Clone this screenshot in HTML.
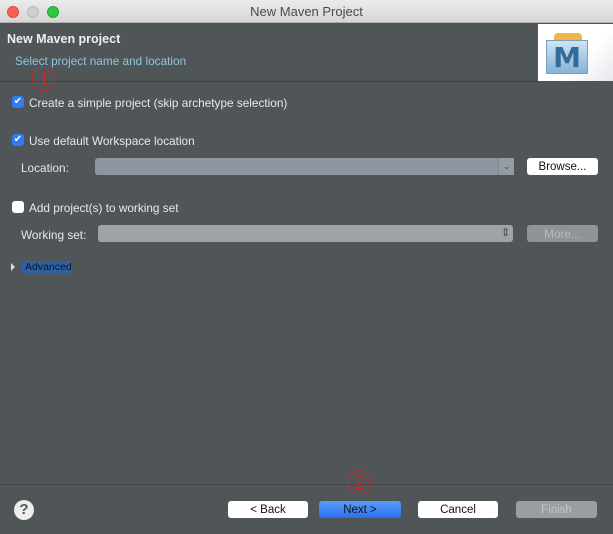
<!DOCTYPE html>
<html><head><meta charset="utf-8"><style>
*{margin:0;padding:0;box-sizing:border-box}
body{width:613px;height:534px;overflow:hidden;background:#505558;font-family:"Liberation Sans","Noto Sans CJK SC",sans-serif;font-size:11.8px;color:#e8e8e8;position:relative}
.abs{position:absolute}
.title{left:0;top:0;width:613px;height:23px;background:linear-gradient(#ececec,#d6d6d6);border-bottom:1px solid #b0b0b0;line-height:24px;font-size:13px;color:#4a4a4a;text-align:center}
.dot{top:6px;width:12px;height:12px;border-radius:50%}
.cb{width:12px;height:12px;border-radius:3px;background:#2f7cf6;color:#fff;font-size:10px;line-height:12px;text-align:center}
.cbo{width:12px;height:12px;border-radius:3px;background:#fff}
.btn{height:17px;background:#fff;border-radius:3px;color:#111;text-align:center;line-height:19px;font-size:11.5px}
.field{height:17px;border-radius:3px}
.num{color:#e02020;font-size:26px;line-height:26px;font-family:"Noto Sans CJK SC",sans-serif;font-weight:300}
</style></head><body>
<div class="abs title">New Maven Project</div>
<div class="abs dot" style="left:7px;background:#fc5f57;border:1px solid #de4a42"></div>
<div class="abs dot" style="left:27px;background:#cfcfcf;border:1px solid #b8b8b8"></div>
<div class="abs dot" style="left:47px;background:#2ac940;border:1px solid #1fa632"></div>
<div class="abs" style="left:7px;top:32px;font-weight:bold;font-size:12.5px;color:#f0f0f0">New Maven project</div>
<div class="abs" style="left:15px;top:54px;color:#8fc6e0">Select project name and location</div>
<div class="abs" style="left:538px;top:24px;width:75px;height:57px;background:linear-gradient(135deg,#fff 60%,#e8e8ee)"></div>
<div class="abs" style="left:554px;top:33px;width:28px;height:8px;background:#f2b548;border-radius:4px 4px 0 0"></div>
<div class="abs" style="left:546px;top:40px;width:42px;height:34px;background:linear-gradient(#cfe3f2,#86b3d6);border:1px solid #7aa0c0;color:#356b9a;font-weight:bold;font-size:28px;text-align:center;line-height:34px;font-family:'DejaVu Sans',sans-serif">M</div>
<div class="abs" style="left:0;top:81px;width:538px;height:1px;background:#3e4245"></div>
<div class="abs num" style="left:31px;top:66px">①</div>
<div class="abs cb" style="left:12px;top:96px">✔</div>
<div class="abs" style="left:29px;top:96px">Create a simple project (skip archetype selection)</div>
<div class="abs cb" style="left:12px;top:134px">✔</div>
<div class="abs" style="left:29px;top:134px">Use default Workspace location</div>
<div class="abs" style="left:21px;top:161px">Location:</div>
<div class="abs field" style="left:95px;top:158px;width:419px;background:#8e979f"></div>
<div class="abs" style="left:498px;top:158px;width:16px;height:17px;background:#959da4;border-left:1px solid #7f878e;color:#444;font-size:9px;text-align:center;line-height:17px">⌄</div>
<div class="abs btn" style="left:527px;top:158px;width:71px">Browse...</div>
<div class="abs cbo" style="left:12px;top:201px"></div>
<div class="abs" style="left:29px;top:201px">Add project(s) to working set</div>
<div class="abs" style="left:21px;top:228px">Working set:</div>
<div class="abs field" style="left:98px;top:225px;width:415px;background:#a0a3a5"></div>
<div class="abs" style="left:501px;top:226px;color:#444;font-size:11px">⇕</div>
<div class="abs field" style="left:527px;top:225px;width:71px;background:#8f9497;color:#b8bcbe;text-align:center;line-height:19px">More...</div>
<div class="abs" style="left:11px;top:263px;width:0;height:0;border-left:4px solid #ddd;border-top:4px solid transparent;border-bottom:4px solid transparent"></div>
<div class="abs" style="left:22px;top:261px;width:50px;height:12px;background:#2e62a8;color:#111;font-size:10.5px;line-height:13px;padding-left:3px">Advanced</div>
<div class="abs" style="left:0;top:484px;width:613px;height:1px;background:#43474a"></div>
<div class="abs num" style="left:346px;top:469px">②</div>
<div class="abs" style="left:14px;top:500px;width:20px;height:20px;border-radius:50%;background:#eee;color:#505558;font-weight:bold;font-size:15px;text-align:center;line-height:20px">?</div>
<div class="abs btn" style="left:228px;top:501px;width:80px">&lt; Back</div>
<div class="abs btn" style="left:319px;top:501px;width:82px;background:linear-gradient(#5a9cfb,#2b6ff0);color:#111">Next &gt;</div>
<div class="abs btn" style="left:418px;top:501px;width:80px">Cancel</div>
<div class="abs btn" style="left:516px;top:501px;width:81px;background:#9a9ea1;color:#c3c6c8">Finish</div>
</body></html>
